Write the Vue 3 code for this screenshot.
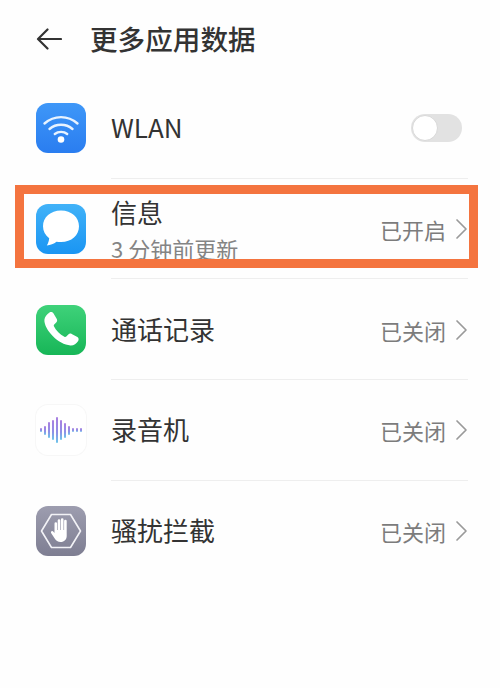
<script setup>
const rows = [
  { id: 'msg', title: '信息', sub: '3 分钟前更新', status: '已开启', frame: true },
  { id: 'call', title: '通话记录', status: '已关闭' },
  { id: 'rec', title: '录音机', status: '已关闭' },
  { id: 'block', title: '骚扰拦截', status: '已关闭', last: true }
]
const bars = [4, 9, 16, 20, 26, 20, 15, 9, 4, 4, 4]
</script>

<template>
  <div class="page">
    <header class="head">
      <svg class="back" width="26" height="22" viewBox="0 0 26 22" fill="none" stroke="#333" stroke-width="2.2" stroke-linecap="round" stroke-linejoin="round">
        <path d="M11.5 1.5 2 11l9.500 9.500M2.500 11H25" />
      </svg>
      <h1>更多应用数据</h1>
    </header>

    <section class="row">
      <div class="icon wifi">
        <svg width="50" height="50" viewBox="0 0 50 50" fill="none" stroke="#e8f3ff" stroke-linecap="round">
          <path d="M8.500 20.500c9.500-8.500 23.500-8.500 33 0" stroke-width="2.400" />
          <path d="M13.500 26c6.500-5.600 16.500-5.600 23 0" stroke-width="2.400" />
          <path d="M18.800 31c3.500-2.800 9-2.800 12.400 0" stroke-width="2.400" />
          <circle cx="25" cy="36.500" r="3.300" fill="#fff" stroke="none" />
        </svg>
      </div>
      <div class="body"><div class="title">WLAN</div></div>
      <div class="toggle"><span class="knob"></span></div>
    </section>

    <section v-for="r in rows" :key="r.id" class="row">
      <div class="icon" :class="r.id">
        <svg v-if="r.id === 'msg'" width="50" height="50" viewBox="0 0 50 50">
          <path d="M25 6.500c-10.500 0-18 6.800-18 15.800 0 5 2.300 9.100 6.200 12-.2 2.300-.9 4.800-2.400 7.200 3.600-.3 7-1.800 9.700-3.800 1.400.3 2.900.4 4.500.4 10.600 0 18-6.800 18-15.800S35.600 6.500 25 6.500z" fill="#fff" />
        </svg>
        <svg v-else-if="r.id === 'call'" width="50" height="50" viewBox="0 0 50 50">
          <path d="M13.500 7.500c1.400-.9 3-.5 3.900.8l3.400 5.800c.6 1.200.4 2.500-.6 3.400l-2 1.900c-.5.500-.6 1.200-.3 1.900 2.300 4.500 5.900 8.200 10.500 10.500.7.300 1.400.2 1.900-.3l2-2.100c.9-.9 2.200-1.100 3.400-.5l5.700 3.200c1.300.8 1.600 2.500.8 3.800-1.800 2.800-4.300 4.600-7.700 4.500C22.600 40 7.800 24.500 8.400 14.800c.2-3 2.500-5.600 5.100-7.300z" fill="#fff" />
        </svg>
        <div v-else-if="r.id === 'rec'" class="wave">
          <span v-for="(b, i) in bars" :key="i" class="bar" :style="{ height: b + 'px' }"></span>
        </div>
        <svg v-else width="50" height="50" viewBox="0 0 50 50">
          <path d="M15.500 8.500h19L44.500 25l-10 16.500h-19L5.500 25z" fill="none" stroke="#f2f2f6" stroke-width="1.600" stroke-linejoin="round" />
          <path d="M18.500 27V17.500a1.300 1.300 0 0 1 2.600 0V24h.6V14.500a1.300 1.300 0 0 1 2.600 0V24h.6V13.500a1.300 1.300 0 0 1 2.600 0V24h.6V15a1.300 1.300 0 0 1 2.600 0v15c0 3.500-2.600 6-6 6-3 0-4.600-1.300-6-3.500l-3.600-5.500c-.8-1.300 1.200-2.700 2.300-1.300z" fill="#fff" />
        </svg>
      </div>
      <div class="body">
        <div class="title" :class="{ tight: r.sub }">{{ r.title }}</div>
        <div v-if="r.sub" class="sub">{{ r.sub }}</div>
      </div>
      <div class="status">{{ r.status }}</div>
      <svg class="chev" width="13" height="22" viewBox="0 0 13 22" fill="none" stroke="#9a9a9a" stroke-width="1.700" stroke-linecap="round" stroke-linejoin="round">
        <path d="M2 2l9 9-9 9" />
      </svg>
      <div v-if="r.frame" class="frame"></div>
    </section>
  </div>
</template>

<style scoped>
.page {
  width: 500px;
  height: 688px;
  overflow: hidden;
  background: #fefefe;
  font-family: "Noto Sans CJK SC", "Liberation Sans", sans-serif;
  color: #333;
}
.head {
  height: 78px;
  padding: 0 0 0 36px;
  display: flex;
  align-items: center;
  gap: 28px;
  box-sizing: border-box;
}
.back { flex: none; }
h1 {
  margin: 0;
  font-size: 27.600px;
  font-weight: 500;
  line-height: 1;
  color: #333;
}
.row {
  position: relative;
  height: 100.7px;
  box-sizing: border-box;
  display: flex;
  align-items: center;
  padding: 0 32px 0 36px;
}
.row::after {
  content: "";
  position: absolute;
  left: 111px;
  right: 32px;
  bottom: 0;
  height: 1px;
  background: #eeeeee;
}
.row:last-child::after { display: none; }
.icon {
  flex: none;
  width: 50px;
  height: 50px;
  border-radius: 12px;
  display: flex;
  align-items: center;
  justify-content: center;
  overflow: hidden;
}
.wifi { background: linear-gradient(180deg, #3e97f8, #2a7df0); }
.msg { background: linear-gradient(180deg, #41b2f8, #1a95f3); }
.call { background: linear-gradient(180deg, #3fd27a, #17b657); }
.rec { background: #fff; box-shadow: 0 0 0 1px #f7f7f7; }
.block { background: linear-gradient(180deg, #9d9daf, #7e7e92); }
.wave {
  display: flex;
  align-items: center;
  gap: 2px;
}
.bar {
  width: 2px;
  border-radius: 1px;
  background: linear-gradient(180deg, #a97fe0, #8f8fe6 60%, #6cc6ea);
}
.body {
  flex: 1;
  margin-left: 25px;
  min-width: 0;
}
.title {
  font-size: 26px;
  line-height: 30px;
  margin-top: -2px;
  color: #333;
}
.title.tight { margin-top: 0; }
.sub {
  font-size: 22px;
  line-height: 26px;
  margin-top: 8px;
  color: #848484;
}
.status {
  font-size: 22px;
  line-height: 28px;
  color: #7c7c7c;
}
.chev { flex: none; margin-left: 9px; }
.toggle {
  width: 51px;
  height: 28px;
  margin-right: 6px;
  border-radius: 14px;
  background: #e2e2e2;
  position: relative;
}
.knob {
  position: absolute;
  left: 1px;
  top: 1px;
  width: 24px;
  height: 24px;
  border-radius: 50%;
  border: 1px solid #d8d8d8;
  background: #fff;
}
.frame {
  position: absolute;
  left: 15px;
  top: 6px;
  width: 463px;
  height: 83px;
  box-sizing: border-box;
  border: 9px solid #f4743f;
  pointer-events: none;
}
</style>

<style>
html, body { margin: 0; background: #fefefe; }
</style>
